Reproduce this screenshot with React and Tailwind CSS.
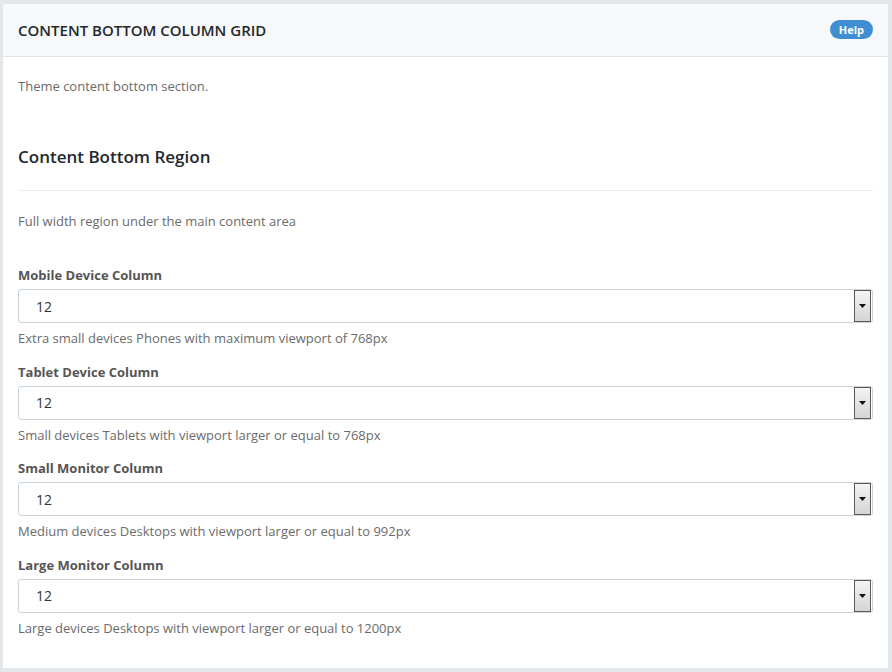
import React from "react";

const fields = [
  {
    label: "Mobile Device Column",
    help: "Extra small devices Phones with maximum viewport of 768px",
  },
  {
    label: "Tablet Device Column",
    help: "Small devices Tablets with viewport larger or equal to 768px",
  },
  {
    label: "Small Monitor Column",
    help: "Medium devices Desktops with viewport larger or equal to 992px",
  },
  {
    label: "Large Monitor Column",
    help: "Large devices Desktops with viewport larger or equal to 1200px",
  },
];

const SelectBox = ({ value }) => {
  return (
    <div className="h-[34px] w-full flex items-center justify-between border border-[#c8d3dc] rounded-[3px] bg-white pl-[17px] pr-px">
      <span className="text-[14px] text-[#333]">{value}</span>
      <div className="w-[17px] h-[32px] border border-[#5a5a5a] bg-gradient-to-b from-[#f4f4f4] to-[#d4d4d4] flex items-center justify-center">
        <svg width="7" height="4" viewBox="0 0 7 4">
          <polygon points="0,0 7,0 3.5,4" fill="#111" />
        </svg>
      </div>
    </div>
  );
};

const FieldGroup = ({ label, help }) => {
  return (
    <div className="flex flex-col">
      <div className="text-[13px] leading-[20px] font-bold text-[#555]">{label}</div>
      <div className="mt-[4px]">
        <SelectBox value="12" />
      </div>
      <div className="mt-[5px] text-[13px] leading-[20px] text-[#6b6b6b]">{help}</div>
    </div>
  );
};

export default function App() {
  return (
    <div
      className="w-[892px] h-[672px] bg-[#e4e7ea] pt-[4px] pl-[3px] pr-[4px] pb-[4px]"
      style={{ fontFamily: '"Open Sans", "Liberation Sans", sans-serif' }}
    >
      <div className="w-[885px] h-[664px] bg-white flex flex-col">
        <div className="h-[53px] bg-[#f7f8fa] border-b border-[#e3e6e9] flex items-center justify-between pl-[15px] pr-[15px]">
          <div className="text-[15px] font-semibold text-[#23282c] pt-px">
            CONTENT BOTTOM COLUMN GRID
          </div>
          <span className="bg-[#3f8ed2] text-white text-[11px] font-bold rounded-full px-[9px] leading-[19px] h-[19px] -mt-[2px]">
            Help
          </span>
        </div>

        <div className="px-[15px] pt-[19px] flex flex-col">
          <div className="text-[13px] leading-[20px] text-[#6b6b6b]">Theme content bottom section.</div>

          <div className="mt-[50px] text-[17px] leading-[22px] font-semibold text-[#23282c]">
            Content Bottom Region
          </div>
          <div className="mt-[22px] border-t border-[#e8ebee]"></div>

          <div className="mt-[20px] text-[13px] leading-[20px] text-[#6b6b6b]">
            Full width region under the main content area
          </div>

          <div className="mt-[34px] flex flex-col gap-[13.67px]">
            {fields.map((f) => (
              <FieldGroup key={f.label} label={f.label} help={f.help} />
            ))}
          </div>
        </div>
      </div>
    </div>
  );
}
